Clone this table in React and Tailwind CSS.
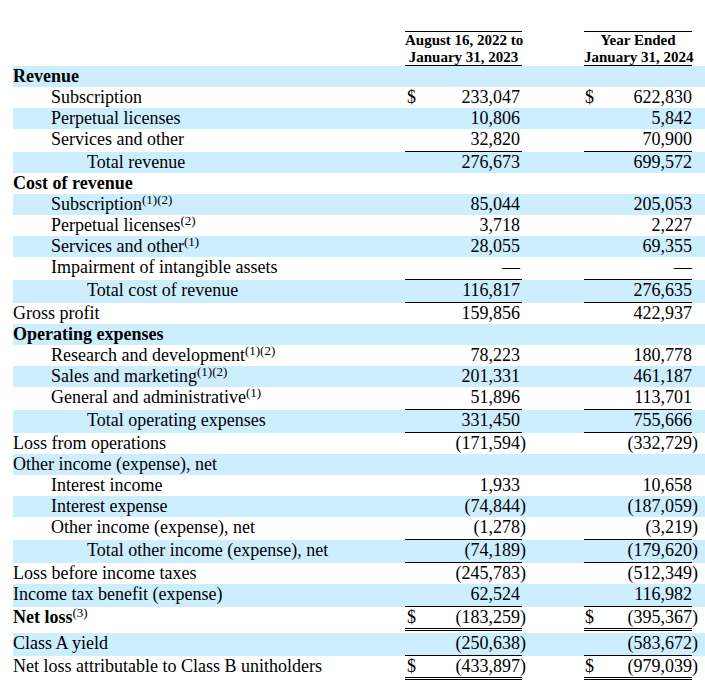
const rows = [
  { label: 'Revenue', level: 0, bold: true, blue: true },
  { label: 'Subscription', level: 1, a: '233,047', b: '622,830', dollar: true },
  { label: 'Perpetual licenses', level: 1, blue: true, a: '10,806', b: '5,842' },
  { label: 'Services and other', level: 1, a: '32,820', b: '70,900', line: 'single' },
  { label: 'Total revenue', level: 2, blue: true, a: '276,673', b: '699,572' },
  { label: 'Cost of revenue', level: 0, bold: true },
  { label: 'Subscription', sup: '(1)(2)', level: 1, blue: true, a: '85,044', b: '205,053' },
  { label: 'Perpetual licenses', sup: '(2)', level: 1, a: '3,718', b: '2,227' },
  { label: 'Services and other', sup: '(1)', level: 1, blue: true, a: '28,055', b: '69,355' },
  { label: 'Impairment of intangible assets', level: 1, a: '—', b: '—', line: 'single' },
  { label: 'Total cost of revenue', level: 2, blue: true, a: '116,817', b: '276,635', line: 'single' },
  { label: 'Gross profit', level: 0, a: '159,856', b: '422,937' },
  { label: 'Operating expenses', level: 0, bold: true, blue: true },
  { label: 'Research and development', sup: '(1)(2)', level: 1, a: '78,223', b: '180,778' },
  { label: 'Sales and marketing', sup: '(1)(2)', level: 1, blue: true, a: '201,331', b: '461,187' },
  { label: 'General and administrative', sup: '(1)', level: 1, a: '51,896', b: '113,701', line: 'single' },
  { label: 'Total operating expenses', level: 2, blue: true, a: '331,450', b: '755,666', line: 'single' },
  { label: 'Loss from operations', level: 0, a: '(171,594)', b: '(332,729)' },
  { label: 'Other income (expense), net', level: 0, blue: true },
  { label: 'Interest income', level: 1, a: '1,933', b: '10,658' },
  { label: 'Interest expense', level: 1, blue: true, a: '(74,844)', b: '(187,059)' },
  { label: 'Other income (expense), net', level: 1, a: '(1,278)', b: '(3,219)', line: 'single' },
  { label: 'Total other income (expense), net', level: 2, blue: true, a: '(74,189)', b: '(179,620)', line: 'single' },
  { label: 'Loss before income taxes', level: 0, a: '(245,783)', b: '(512,349)' },
  { label: 'Income tax benefit (expense)', level: 0, blue: true, a: '62,524', b: '116,982', line: 'single' },
  { label: 'Net loss', sup: '(3)', level: 0, bold: true, dollar: true, a: '(183,259)', b: '(395,367)', line: 'double', gap: true },
  { label: 'Class A yield', level: 0, blue: true, a: '(250,638)', b: '(583,672)', line: 'single' },
  { label: 'Net loss attributable to Class B unitholders', level: 0, dollar: true, a: '(433,897)', b: '(979,039)', line: 'double' },
]

const indent = ['pl-0', 'pl-[38px]', 'pl-[74px]']

function Amount({ value }) {
  if (!value) return null
  if (value.endsWith(')')) {
    return (
      <span>
        {value.slice(0, -1)}
        <span className="inline-block w-0">)</span>
      </span>
    )
  }
  return <span>{value}</span>
}

function Cell({ value, dollar, line, className }) {
  const border =
    line === 'double'
      ? 'border-b-[3px] border-double border-black'
      : line === 'single'
        ? 'border-b border-black pb-[1px]'
        : ''
  return (
    <div className={`flex justify-between ${border} ${className}`}>
      <span>{dollar ? '$' : ''}</span>
      <Amount value={value} />
    </div>
  )
}

export default function App() {
  return (
    <div className="w-[705px] h-[689px] bg-white text-black pt-[31px] pl-[13px] font-['Liberation_Serif','Times_New_Roman',serif] text-[18px] leading-[21px]">
      <div className="flex font-bold text-[15px] leading-[16.5px] text-center whitespace-nowrap">
        <div className="flex-1" />
        <div className="w-[117px] border-y border-black">
          August 16, 2022 to<br />January 31, 2023
        </div>
        <div className="w-[62px]" />
        <div className="w-[108px] border-y border-black">
          Year Ended<br />January 31, 2024
        </div>
        <div className="w-[13px]" />
      </div>

      {rows.map((r, i) => (
        <div key={i} className={`flex items-start ${r.blue ? 'bg-[#cceeff]' : ''} ${r.gap ? 'mb-[2px]' : ''}`}>
          <div className={`flex-1 whitespace-nowrap ${indent[r.level]} ${r.bold ? 'font-bold' : ''}`}>
            {r.label}
            {r.sup && <sup className="text-[13px] font-normal -top-[6px]">{r.sup}</sup>}
          </div>
          <Cell value={r.a} dollar={r.dollar} line={r.line} className="w-[117px] pl-[2px] pr-[2px]" />
          <div className="w-[62px]" />
          <Cell value={r.b} dollar={r.dollar} line={r.line} className="w-[108px] pl-[1px]" />
          <div className="w-[13px]" />
        </div>
      ))}
    </div>
  )
}
